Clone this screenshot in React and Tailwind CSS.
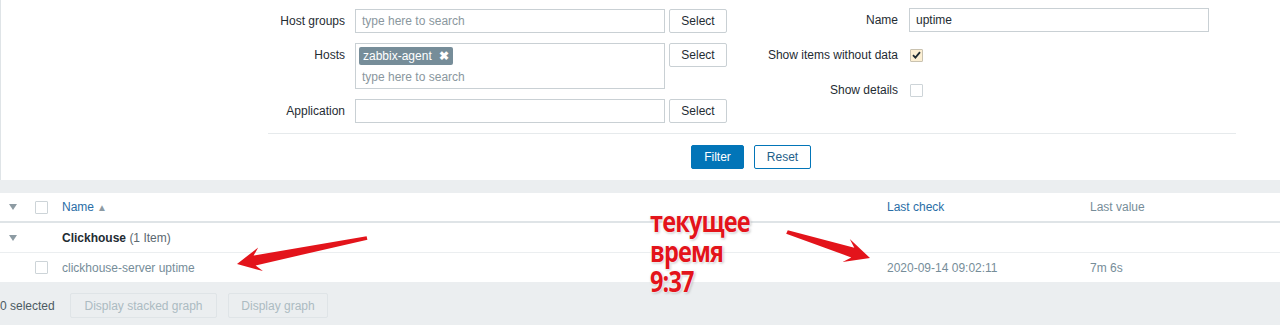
import React from "react";

const inputCls = "h-[24px] border border-[#c9d0d4] bg-white px-[6px] flex items-center";
const selBtn = "h-[24px] w-[58px] border border-[#c9d0d4] bg-white rounded-[2px] flex items-center justify-center text-[#1f2c33]";

function Tri() {
  return (
    <svg width="8" height="6" viewBox="0 0 8 6" className="block">
      <path d="M0 0 L8 0 L4 6 Z" fill="#8d9ba3" />
    </svg>
  );
}

function Box({ checked }) {
  return (
    <div className={"w-[13px] h-[13px] border rounded-[1px] flex items-center justify-center " + (checked ? "border-[#c9c2b0] bg-[#fcefd3]" : "border-[#cdd4d8] bg-white")}>
      {checked && (
        <svg width="9" height="8" viewBox="0 0 9 8">
          <path d="M1 4.2 L3.4 6.6 L8 1.2" stroke="#1f2c33" strokeWidth="1.8" fill="none" />
        </svg>
      )}
    </div>
  );
}

export default function App() {
  return (
    <div className="relative w-[1280px] h-[325px] overflow-hidden bg-[#ebeef0] font-['Liberation_Sans',Arial,sans-serif] text-[12px] text-[#1f2c33]">
      {/* filter panel */}
      <div className="h-[180px] bg-white border-l border-[#dfe4e7] pl-[267px]">
        <div className="w-[968px] h-[134px] border-b border-[#e6eaec] flex pt-[8px]">
          {/* left column */}
          <div className="w-[480px] flex flex-col gap-[10px] pt-[1px]">
            <div className="flex items-center">
              <div className="w-[77px] text-right">Host groups</div>
              <div className={inputCls + " ml-[10px] w-[310px] text-[#8a979e]"}>type here to search</div>
              <div className={selBtn + " ml-[4px]"}>Select</div>
            </div>
            <div className="flex items-start">
              <div className="w-[77px] text-right h-[24px] leading-[24px]">Hosts</div>
              <div className="ml-[10px] w-[310px] h-[46px] border border-[#c9d0d4] bg-white pl-[3px] pt-[3px]">
                <div className="inline-flex items-center h-[18px] px-[4px] bg-[#768d99] text-white rounded-[2px]">
                  zabbix-agent<span className="ml-[7px] text-[12px] font-bold leading-none">✖</span>
                </div>
                <div className="pl-[3px] pt-[3px] text-[#8a979e]">type here to search</div>
              </div>
              <div className={selBtn + " ml-[4px]"}>Select</div>
            </div>
            <div className="flex items-center">
              <div className="w-[77px] text-right">Application</div>
              <div className={inputCls + " ml-[10px] w-[310px]"}></div>
              <div className={selBtn + " ml-[4px]"}>Select</div>
            </div>
          </div>
          {/* right column */}
          <div className="flex flex-col gap-[11px]">
            <div className="flex items-center">
              <div className="w-[150px] text-right">Name</div>
              <div className={inputCls + " ml-[11px] w-[300px]"}>uptime</div>
            </div>
            <div className="flex items-center h-[24px]">
              <div className="w-[150px] text-right">Show items without data</div>
              <div className="ml-[12px]"><Box checked /></div>
            </div>
            <div className="flex items-center h-[24px]">
              <div className="w-[150px] text-right">Show details</div>
              <div className="ml-[12px]"><Box /></div>
            </div>
          </div>
        </div>
        <div className="w-[968px] flex gap-[10px] pt-[11px] pl-[423px]">
          <div className="h-[24px] w-[53px] bg-[#0275b8] border border-[#0275b8] rounded-[2px] text-white flex items-center justify-center">Filter</div>
          <div className="h-[24px] w-[57px] bg-white border border-[#0275b8] rounded-[2px] text-[#1f5f8a] flex items-center justify-center">Reset</div>
        </div>
      </div>

      {/* table */}
      <div className="mt-[13px] bg-white">
        <div className="flex items-center h-[30px] border-b-2 border-[#dfe4e7]">
          <div className="w-[35px] pl-[9px]"><Tri /></div>
          <div className="w-[27px]"><Box /></div>
          <div className="w-[825px] text-[#2a6ea6] flex items-center">Name<span className="ml-[3px] text-[#8d9ba3] text-[10px]">▲</span></div>
          <div className="w-[203px] text-[#2a6ea6]">Last check</div>
          <div className="text-[#768d99]">Last value</div>
        </div>
        <div className="flex items-center h-[30px] border-b border-[#ebeef0]">
          <div className="w-[62px] pl-[9px]"><Tri /></div>
          <div><span className="font-bold">Clickhouse</span> <span className="text-[#5b6870]">(1 Item)</span></div>
        </div>
        <div className="flex items-center h-[29px]">
          <div className="w-[35px]"></div>
          <div className="w-[27px]"><Box /></div>
          <div className="w-[825px] text-[#768d99]">clickhouse-server uptime</div>
          <div className="w-[203px] text-[#768d99]">2020-09-14 09:02:11</div>
          <div className="text-[#768d99]">7m 6s</div>
        </div>
      </div>

      {/* action bar */}
      <div className="flex items-center pt-[11px] pl-0 gap-[10px]">
        <div className="w-[60px] text-[#4b5a62]">0 selected</div>
        <div className="h-[25px] w-[147px] border border-[#dfe4e7] rounded-[2px] text-[#acbbc2] flex items-center justify-center">Display stacked graph</div>
        <div className="ml-[1px] h-[25px] w-[100px] border border-[#dfe4e7] rounded-[2px] text-[#acbbc2] flex items-center justify-center">Display graph</div>
      </div>

      {/* annotations */}
      <svg className="absolute inset-0 pointer-events-none" width="1280" height="325" viewBox="0 0 1280 325">
        <polygon points="237,264 258.2,247.5 253.6,255.6 366.6,236.3 367.4,239.7 255.6,265.4 262.9,271.1" fill="#e3141b" />
        <polygon points="870,258 849.8,239 854.3,247.8 787.8,230.3 786.2,233.7 851.3,257.4 842.6,262" fill="#e3141b" />
      </svg>
      <div className="absolute left-[650px] top-[206px] font-['Open_Sans',sans-serif] font-bold text-[28px] leading-[30px] text-[#e3141b] tracking-[-1px] origin-left scale-x-[0.84] [text-shadow:0_0_2px_#fff,0_0_2px_#fff,0_0_3px_#fff,1px_1px_3px_rgba(0,0,0,0.35)]">
        <div>текущее</div>
        <div>время</div>
        <div>9:37</div>
      </div>
    </div>
  );
}
